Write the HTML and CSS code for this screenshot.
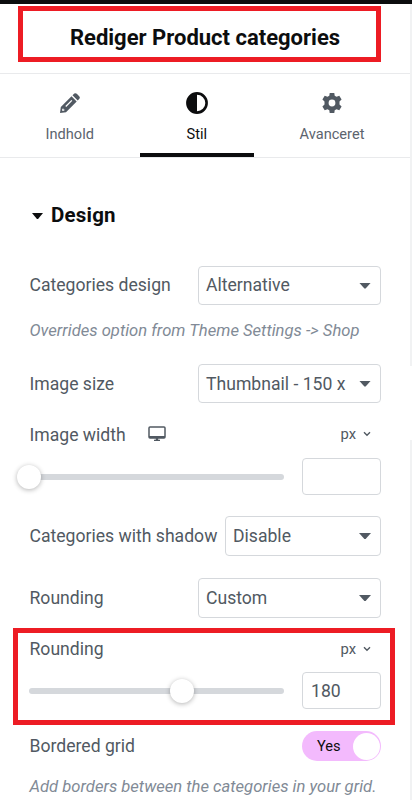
FILE: index.html
```html
<!DOCTYPE html>
<html lang="da">
<head>
<meta charset="utf-8">
<title>Rediger Product categories</title>
<link rel="stylesheet" href="styles.css">
</head>
<body>
<div class="panel">
  <header class="header"><h1 class="title"><span>Rediger Product categories</span></h1></header>
  <nav class="tabs">
    <div class="tab">
      <svg class="tab-icon" viewBox="0 0 20 20"><path fill="currentColor" fill-rule="evenodd" d="M0 20 .8 14 11.500 3.300 16.700 8.500 6 19.200ZM2.400 15.800 2 17.200 2.800 18 4.400 17.600 4.500 16.500 3.500 16.400 3.400 15.600ZM5.300 13 6.200 13.900 12.300 7.800 11.400 6.900ZM12.500 2.300 14.300.6Q15.500-.4 16.800.8L19.200 3.200Q20.400 4.500 19.400 5.700L17.700 7.500Z"/></svg>
      <span>Indhold</span>
    </div>
    <div class="tab active">
      <svg class="tab-icon contrast" viewBox="0 0 22 22"><circle cx="11" cy="11" r="9.600" fill="none" stroke="currentColor" stroke-width="2.600"/><path fill="currentColor" d="M11 1a10 10 0 0 0 0 20z"/></svg>
      <span>Stil</span>
    </div>
    <div class="tab">
      <svg class="tab-icon" viewBox="0 0 20 20"><path fill="currentColor" fill-rule="evenodd" d="M7.700 0H12.300L12.700 2.700 14.500 3.800 17.300 2.800 19.600 6.600 17.500 8.500V11.500L19.600 13.400 17.300 17.200 14.500 16.200 12.700 17.300 12.300 20H7.700L7.300 17.300 5.500 16.200 2.700 17.200.4 13.400 2.500 11.500V8.500L.4 6.600 2.700 2.800 5.500 3.800 7.300 2.700ZM10 6.600a3.400 3.400 0 1 0 0 6.800 3.400 3.400 0 0 0 0-6.800Z"/></svg>
      <span>Avanceret</span>
    </div>
  </nav>
  <main class="controls">
    <h2 class="section"><i class="caret"></i><span>Design</span></h2>
    <div class="row design"><label>Categories design</label><div class="select"><span>Alternative</span><i class="caret"></i></div></div>
    <p class="hint overrides"><span>Overrides option from Theme Settings -&gt; Shop</span></p>
    <div class="row size"><label>Image size</label><div class="select"><span>Thumbnail - 150 x</span><i class="caret"></i></div></div>
    <div class="row unit-row">
      <label>Image width</label>
      <svg class="monitor" viewBox="0 0 18 16"><path d="M2 1H16Q17 1 17 2V11Q17 12 16 12H2Q1 12 1 11V2Q1 1 2 1Z" fill="none" stroke="currentColor" stroke-width="1.500"/><path d="M1 10H17V12H1ZM7.800 12H10.200V13.700H12V15H6V13.700H7.800Z" fill="currentColor"/></svg>
      <div class="unit"><span>px</span><svg viewBox="0 0 8 6"><path d="M1 1.200 4 4.200 7 1.200" fill="none" stroke="currentColor" stroke-width="1.400"/></svg></div>
    </div>
    <div class="row slider-row"><div class="track"><i class="thumb"></i></div><div class="number"></div></div>
    <div class="row shadow"><label>Categories with shadow</label><div class="select narrow"><span>Disable</span><i class="caret"></i></div></div>
    <div class="row rounding"><label>Rounding</label><div class="select"><span>Custom</span><i class="caret"></i></div></div>
    <section class="highlight">
      <div class="row unit-row">
        <label>Rounding</label>
        <div class="unit"><span>px</span><svg viewBox="0 0 8 6"><path d="M1 1.200 4 4.200 7 1.200" fill="none" stroke="currentColor" stroke-width="1.400"/></svg></div>
      </div>
      <div class="row slider-row"><div class="track"><i class="thumb middle"></i></div><div class="number"><span>180</span></div></div>
    </section>
    <div class="row grid-row"><label>Bordered grid</label><div class="toggle"><span>Yes</span><i class="knob"></i></div></div>
    <p class="hint borders"><span>Add borders between the categories in your grid.</span></p>
  </main>
</div>
<div class="edge"></div>
</body>
</html>
```
FILE: styles.css
```css
* { box-sizing: border-box; }
html, body { margin: 0; height: 800px; overflow: hidden; }
body { display: flex; background: #fff; color: #515962; font-family: Roboto, "Liberation Sans", sans-serif; font-size: 17.600px; border-top: 4px solid #0c0d0e; }
h1, h2, p { margin: 0; }
.panel { width: 410px; flex: none; }
.edge { width: 2px; background: linear-gradient(#f1f2f3 0 362px, #fff 362px 436px, #f1f2f3 436px); }
.header { height: 70px; padding: 2px 0 0 18px; border-bottom: 1px solid #e9eaec; }
.title { width: 363px; height: 56px; border: 5px solid #ed1c24; padding: 7px 0 0 11px; display: flex; align-items: center; justify-content: center; color: #0c0d0e; font-size: 22px; font-weight: 700; white-space: nowrap; }
.tabs { display: grid; grid-template-columns: 139.5px 114.5px 156px; height: 84px; border-bottom: 1px solid #e9eaec; font-size: 14.600px; }
.tab { display: flex; flex-direction: column; align-items: center; padding-top: 19px; color: #5c646e; line-height: 20px; }
.tab-icon { width: 20px; height: 20px; margin-bottom: 11px; color: #515962; flex: none; }
.contrast { width: 22px; height: 22px; margin: -1px 0 10px; color: #0c0d0e; }
.active { color: #0c0d0e; border-bottom: 4px solid #0c0d0e; }
.controls { padding: 40px 29px 0; }
.section { display: flex; align-items: center; height: 34px; font-size: 20.500px; font-weight: 700; letter-spacing: .2px; color: #0c0d0e; gap: 8px; padding-left: 3px; }
.caret { display: block; width: 12px; height: 6px; background: currentColor; clip-path: polygon(0 0, 100% 0, 55% 100%, 45% 100%); flex: none; }
.section .caret { width: 11px; margin-top: 2px; }
.row { display: flex; align-items: center; justify-content: space-between; width: 352px; white-space: nowrap; }
.row label { padding-left: .5px; }
.select { display: flex; align-items: center; justify-content: space-between; width: 183px; height: 39px; border: 1px solid #d5d8dc; border-radius: 4px; padding: 0 9px 0 7px; flex: none; }
.design .select span { margin-top: -1px; }
.narrow { width: 156px; }
.design { margin-top: 34px; }
.design label { margin-top: -1px; }
.hint { display: flex; align-items: center; height: 24px; font-size: 16.630px; font-style: italic; color: #818a96; white-space: nowrap; padding-left: .5px; }
.overrides { margin-top: 13px; }
.size { margin-top: 22px; }
.unit-row { height: 30px; }
.size + .unit-row { margin-top: 16px; }
.size + .unit-row label { margin-top: 1px; }
.monitor { width: 18px; height: 16px; margin: 0 auto 0 22px; }
.unit { display: flex; align-items: center; gap: 7px; font-size: 14.800px; padding-right: 10px; }
.unit svg { width: 8px; height: 6px; }
.slider-row { height: 37px; margin-top: 9px; }
.track { width: 255px; height: 6px; border-radius: 3px; background: #d5d8dc; position: relative; }
.thumb { position: absolute; width: 24px; height: 24px; left: -12px; top: -9px; border-radius: 50%; background: #fff; box-shadow: 0 1px 5px rgba(0, 0, 0, .3); }
.middle { left: 141px; }
.number { display: flex; align-items: center; width: 79px; height: 37px; border: 1px solid #d5d8dc; border-radius: 4px; padding-left: 8px; }
.shadow { margin-top: 21px; }
.shadow .select, .rounding .select { height: 40px; }
.rounding { margin-top: 22px; }
.highlight { width: 382px; height: 97px; margin: 10px 0 0 -16px; border: 5px solid #ed1c24; padding: 0 11px; }
.highlight .unit-row { height: 31px; }
.highlight .slider-row { margin-top: 8px; }
.grid-row { margin-top: 6px; }
.toggle { display: flex; align-items: center; justify-content: space-between; width: 79px; height: 30px; border-radius: 15px; background: #f3bafd; color: #0c0d0e; font-size: 14.600px; padding: 0 1px 0 15px; }
.knob { width: 27px; height: 27px; border-radius: 50%; background: #fff; }
.borders { margin-top: 13px; }
```
